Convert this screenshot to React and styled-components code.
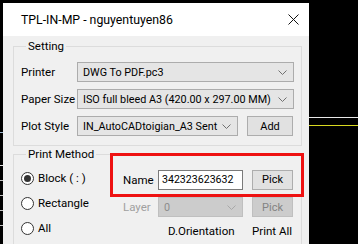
import React from 'react';
import styled, { createGlobalStyle } from 'styled-components';

const GlobalStyle = createGlobalStyle`
  html, body {
    margin: 0;
    padding: 0;
    background: #000;
  }
  body {
    font-family: Roboto, "Noto Sans", "Liberation Sans", Arial, sans-serif;
  }
`;

const Desktop = styled.div`
  position: relative;
  width: 358px;
  height: 244px;
  overflow: hidden;
  background: #000;
`;

const Canvas = styled.svg`
  position: absolute;
  left: 0;
  top: 0;
`;

const Dialog = styled.div`
  position: absolute;
  left: 3px;
  top: 3px;
  width: 306px;
  height: 260px;
  background: #f0f0f0;
  font-size: 11px;
  color: #000;
`;

const TitleBar = styled.div`
  height: 33px;
  background: #fff;
  display: flex;
  align-items: center;
  justify-content: space-between;
  padding: 0 10px 0 18px;
  font-size: 12.3px;
`;

const CloseButton = styled.div`
  width: 12px;
  height: 12px;
  display: flex;
  align-items: center;
  justify-content: center;
`;

const Body = styled.div`
  padding: 3px 7px 0 10px;
  display: flex;
  flex-direction: column;
  gap: 1px;
`;

const Group = styled.fieldset`
  margin: 0;
  border: 1px solid #dcdcdc;
  padding: ${(p) => p.$pad};
  min-width: 0;
`;

const Legend = styled.legend`
  padding: 0 2px;
  margin-left: 5px;
  line-height: 14px;
  font-size: 11.5px;
`;

const Rows = styled.div`
  display: flex;
  flex-direction: column;
  gap: 7px;
`;

const Row = styled.div`
  display: flex;
  align-items: center;
  height: 20px;
`;

const Label = styled.div`
  width: ${(p) => (p.$w ? `${p.$w}px` : 'auto')};
  flex: none;
  white-space: nowrap;
  font-size: 11.5px;
  color: ${(p) => (p.$disabled ? '#a0a0a0' : '#000')};
`;

const Select = styled.div`
  box-sizing: border-box;
  width: ${(p) => p.$w}px;
  height: 20px;
  flex: none;
  display: flex;
  align-items: center;
  justify-content: space-between;
  padding: 0 6px 0 5px;
  font-size: 10.8px;
  background: ${(p) => (p.$disabled ? '#cccccc' : '#e5e5e5')};
  border: 1px solid ${(p) => (p.$disabled ? '#bfbfbf' : '#acacac')};
  color: ${(p) => (p.$disabled ? '#8d8d8d' : '#000')};
  white-space: nowrap;
  overflow: hidden;
`;

const Button = styled.div`
  box-sizing: border-box;
  width: ${(p) => p.$w}px;
  height: ${(p) => p.$h || 20}px;
  flex: none;
  display: flex;
  align-items: center;
  justify-content: center;
  margin-left: ${(p) => p.$ml || 0}px;
  background: ${(p) => (p.$disabled ? '#cccccc' : '#e1e1e1')};
  border: 1px solid ${(p) => (p.$disabled ? '#bfbfbf' : '#adadad')};
  color: ${(p) => (p.$disabled ? '#838383' : '#000')};
`;

const MethodBody = styled.div`
  display: flex;
  padding-top: 7px;
`;

const RadioCol = styled.div`
  width: 102px;
  flex: none;
  display: flex;
  flex-direction: column;
  gap: 5px;
  font-size: 11.5px;
`;

const RadioRow = styled.div`
  height: 20px;
  display: flex;
  align-items: center;
  gap: 4px;
`;

const RadioCircle = styled.span`
  box-sizing: border-box;
  width: 13px;
  height: 13px;
  border-radius: 50%;
  border: 1px solid #333;
  background: #fff;
  display: flex;
  align-items: center;
  justify-content: center;
  &::after {
    content: '';
    width: 7px;
    height: 7px;
    border-radius: 50%;
    background: ${(p) => (p.$checked ? '#333' : 'transparent')};
  }
`;

const PickGrid = styled.div`
  display: grid;
  grid-template-columns: 26px 85px 41px;
  column-gap: 9px;
  grid-template-rows: 21px 20px 14px;
  row-gap: 7px;
  padding-top: 1px;
  align-items: center;
`;

const TextInput = styled.div`
  box-sizing: border-box;
  height: 20px;
  display: flex;
  align-items: center;
  padding-left: 3px;
  font-size: 10.6px;
  background: #fff;
  border: 1px solid #7a7a7a;
`;

const PlainText = styled.div`
  padding-left: ${(p) => p.$pl || 0}px;
  white-space: nowrap;
  font-size: 11.5px;
`;

const Highlight = styled.div`
  position: absolute;
  left: 107px;
  top: 150px;
  width: 194px;
  height: 44px;
  box-sizing: border-box;
  border: 3px solid #ee1111;
  pointer-events: none;
`;

function Chevron({ color = '#707070' }) {
  return (
    <svg width="9" height="5" viewBox="0 0 9 5">
      <polyline points="0.5,0.5 4.5,4.5 8.5,0.5" fill="none" stroke={color} strokeWidth="1" />
    </svg>
  );
}

function App() {
  return (
    <>
      <GlobalStyle />
      <Desktop>
        <Canvas width="358" height="244">
          <line x1="309" y1="117.5" x2="358" y2="117.5" stroke="#e8e8e8" />
          <line x1="309" y1="125.5" x2="358" y2="125.5" stroke="#d8d820" />
          <line x1="0" y1="132.5" x2="3" y2="132.5" stroke="#9fb8d0" />
          <line x1="0" y1="165.5" x2="3" y2="165.5" stroke="#e0e0e0" />
          <line x1="0" y1="180.5" x2="3" y2="180.5" stroke="#c0c0c0" />
          <line x1="0" y1="195.5" x2="3" y2="195.5" stroke="#c0c0c0" />
          <line x1="0" y1="210.5" x2="3" y2="210.5" stroke="#c0c0c0" />
          <line x1="0" y1="225.5" x2="3" y2="225.5" stroke="#c0c0c0" />
        </Canvas>
        <Dialog>
          <TitleBar>
            <span>TPL-IN-MP - nguyentuyen86</span>
            <CloseButton>
              <svg width="11" height="11" viewBox="0 0 11 11">
                <path d="M0.5 0.5 L10.5 10.5 M10.5 0.5 L0.5 10.5" stroke="#111" strokeWidth="1" />
              </svg>
            </CloseButton>
          </TitleBar>
          <Body>
            <Group $pad="9px 7px 9px 7px">
              <Legend>Setting</Legend>
              <Rows>
                <Row>
                  <Label $w={56}>Printer</Label>
                  <Select $w={217}>
                    <span>DWG To PDF.pc3</span>
                    <Chevron />
                  </Select>
                </Row>
                <Row>
                  <Label $w={56}>Paper Size</Label>
                  <Select $w={217}>
                    <span>ISO full bleed A3 (420.00 x 297.00 MM)</span>
                    <Chevron />
                  </Select>
                </Row>
                <Row>
                  <Label $w={56}>Plot Style</Label>
                  <Select $w={161}>
                    <span>IN_AutoCADtoigian_A3 Sent</span>
                    <Chevron />
                  </Select>
                  <Button $w={46} $h={20} $ml={9}>Add</Button>
                </Row>
              </Rows>
            </Group>
            <Group $pad="0 7px 20px 7px">
              <Legend>Print Method</Legend>
              <MethodBody>
                <RadioCol>
                  <RadioRow>
                    <RadioCircle $checked />
                    <span>Block ( : )</span>
                  </RadioRow>
                  <RadioRow>
                    <RadioCircle />
                    <span>Rectangle</span>
                  </RadioRow>
                  <RadioRow>
                    <RadioCircle />
                    <span>All</span>
                  </RadioRow>
                </RadioCol>
                <PickGrid>
                  <Label>Name</Label>
                  <TextInput>342323623632</TextInput>
                  <Button $w={41}>Pick</Button>
                  <Label $disabled>Layer</Label>
                  <Select $w={85} $disabled>
                    <span>0</span>
                    <Chevron color="#a8a8a8" />
                  </Select>
                  <Button $w={41} $disabled>Pick</Button>
                  <span />
                  <PlainText $pl={10}>D.Orientation</PlainText>
                  <PlainText>Print All</PlainText>
                </PickGrid>
              </MethodBody>
            </Group>
          </Body>
          <Highlight />
        </Dialog>
      </Desktop>
    </>
  );
}

export default App;
